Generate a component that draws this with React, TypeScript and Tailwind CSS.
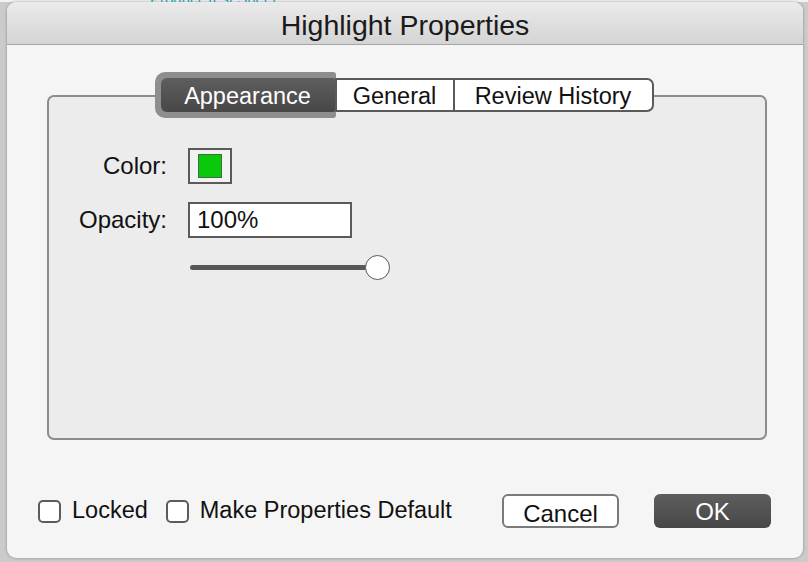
const font = { fontFamily: '"Liberation Sans", Arial, sans-serif' }

const Checkbox = ({ label }: { label: string }) => (
    <label className="flex items-center gap-[11px]">
        <span className="w-[23px] h-[23px] rounded-[5px] border-2 border-[#5c5c5c] bg-white" />
        <span className="text-[23.5px] text-[#111]">{label}</span>
    </label>
)

const App = () => {
    return (
        <div className="w-[808px] h-[562px] bg-[#cbcbcb] overflow-hidden" style={font}>
            <div className="h-[2px] bg-[#f2f2f2] overflow-hidden pl-[150px]">
                <div className="-mt-[12px] text-[15px] text-[#2a9fb8]">Product Test Sheet</div>
            </div>

            <div className="ml-[7px] w-[796px] h-[556px] rounded-[9px] bg-[#f5f5f5] overflow-hidden shadow-[0_0_3px_rgba(0,0,0,0.35)] flex flex-col">
                {/* title bar */}
                <div className="h-[43px] shrink-0 bg-gradient-to-b from-[#ebebeb] to-[#d4d4d4] border-b border-[#a6a6a6] flex items-center justify-center">
                    <span className="text-[28.5px] text-[#1a1a1a] pt-[5px]">Highlight Properties</span>
                </div>

                {/* tab group */}
                <div className="mt-[33px] ml-[40px] w-[720px] flex flex-col">
                    <div className="relative z-10 flex justify-center h-[34px]">
                        <div className="flex text-[23.5px] leading-none">
                            <div className="-ml-[6px] -my-[6px] p-[6px] pr-[1px] rounded-l-[10px] rounded-r-[3px] bg-[#8e8e8e]">
                                <div className="w-[174px] h-[34px] pt-[3px] rounded-l-[6px] rounded-r-[2px] bg-gradient-to-b from-[#5e5e5e] to-[#474747] text-white flex items-center justify-center">
                                    Appearance
                                </div>
                            </div>
                            <div className="-ml-[1px] w-[120px] h-[34px] pt-[3px] bg-white border-2 border-[#5a5a5a] flex items-center justify-center text-[#111]">
                                General
                            </div>
                            <div className="w-[199px] h-[34px] pt-[3px] bg-white border-y-2 border-r-2 border-[#5a5a5a] rounded-r-[7px] flex items-center justify-center text-[#111]">
                                Review History
                            </div>
                        </div>
                    </div>

                    <div className="-mt-[17px] h-[345px] rounded-[7px] border-2 border-[#8d8d8d] bg-[#ececec] pt-[51px]">
                        <div className="grid grid-cols-[118px_auto] gap-x-[21px] items-center text-[24px] text-[#111]">
                            <span className="text-right">Color:</span>
                            <div className="w-[44px] h-[36px] border-2 border-[#5a5a5a] bg-[#f2f2f2] flex items-center justify-center">
                                <div className="w-[24px] h-[24px] bg-[#0ac80a] border border-[#3d6e3d]" />
                            </div>

                            <span className="text-right mt-[18px]">Opacity:</span>
                            <div className="mt-[18px] w-[164px] h-[36px] border-2 border-[#5a5a5a] bg-white pl-[7px] flex items-center">
                                100%
                            </div>

                            <span />
                            <div className="mt-[17px] ml-[2px] flex items-center">
                                <div className="w-[180px] h-[5px] rounded-full bg-[#585858]" />
                                <div className="-ml-[5px] w-[25px] h-[25px] rounded-full bg-white border-[1.5px] border-[#5a5a5a]" />
                            </div>
                        </div>
                    </div>
                </div>

                {/* bottom row */}
                <div className="mt-[54px] h-[34px] pl-[31px] pr-[32px] flex items-center justify-between">
                    <div className="flex items-center gap-[18px]">
                        <Checkbox label="Locked" />
                        <Checkbox label="Make Properties Default" />
                    </div>
                    <div className="flex gap-[35px] text-[24px]">
                        <button className="w-[117px] h-[34px] rounded-[6px] border-2 border-[#7a7a7a] bg-white text-[#111] pb-[2px]">Cancel</button>
                        <button className="w-[117px] h-[34px] rounded-[6px] bg-gradient-to-b from-[#5e5e5e] to-[#474747] text-white pb-[2px]">OK</button>
                    </div>
                </div>
            </div>
        </div>
    )
}

export default App
